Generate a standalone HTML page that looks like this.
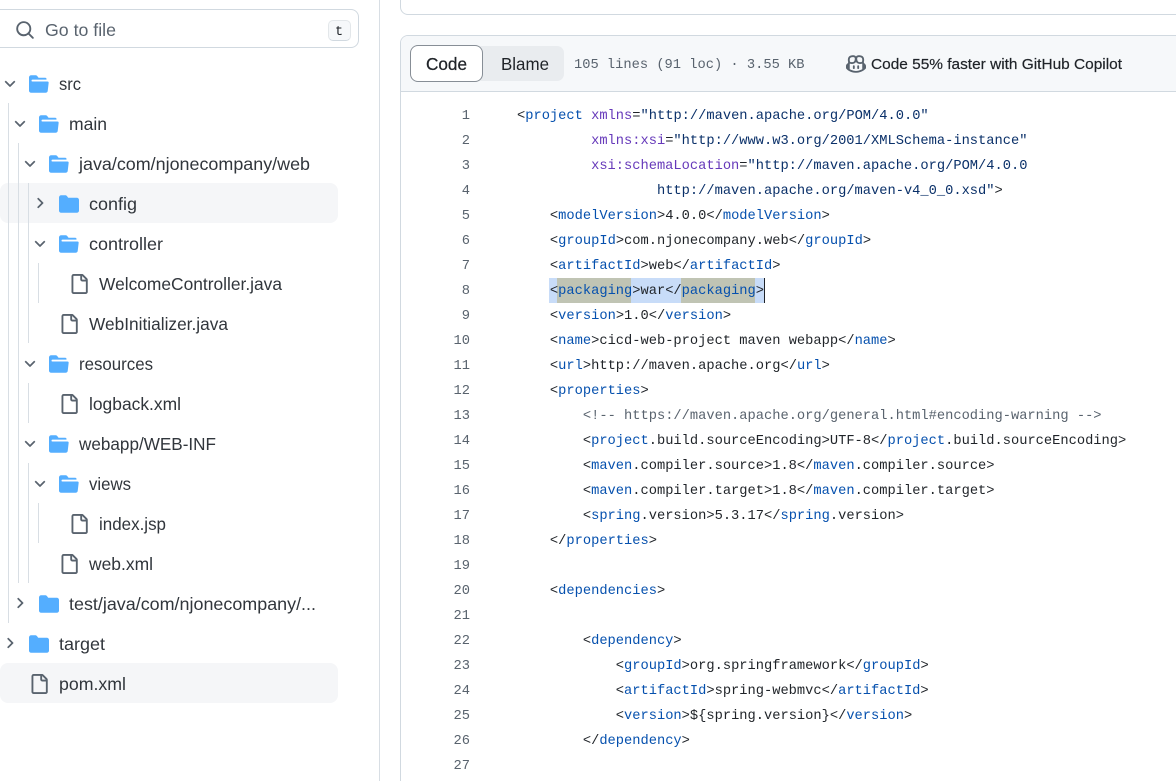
<!DOCTYPE html>
<html lang="en"><head><meta charset="utf-8"><title>pom.xml</title>
<style>
html,body{margin:0;padding:0;background:#fff;width:1176px;height:781px;overflow:hidden}
#w{position:relative;width:1176px;height:781px;overflow:hidden;font-family:"Liberation Sans",sans-serif;color:#1f2328}
.a{position:absolute;box-sizing:border-box}
svg{position:absolute;left:0;top:0}
svg text{font-family:"Liberation Sans",sans-serif}
.n{font-size:17.5px;fill:#31363c}
pre{margin:0;position:absolute;font:13.73px/25px "Liberation Mono",monospace;color:#1f2328}
.b{color:#0550ae}.p{color:#6639ba}.s{color:#0a3069}.c{color:#59636e}
</style></head><body><div id="w">
<div class="a" style="left:379px;top:0;width:1px;height:781px;background:#d8dee4"></div>
<div class="a" style="left:-10px;top:9px;width:369px;height:39px;border:1px solid #d1d9e0;border-radius:8px"></div>
<div class="a" style="left:328px;top:20px;width:23px;height:21px;background:#f6f8fa;border:1px solid #e3e7ea;border-bottom-color:#d1d9e0;border-radius:5px"></div>
<div class="a" style="left:0;top:183px;width:338px;height:40px;background:#f5f6f8;border-radius:8px"></div>
<div class="a" style="left:0;top:663px;width:338px;height:40px;background:#f5f6f8;border-radius:8px"></div>
<div class="a" style="left:8px;top:103px;width:1px;height:520px;background:#d8dee4"></div>
<div class="a" style="left:18px;top:143px;width:1px;height:440px;background:#d8dee4"></div>
<div class="a" style="left:28px;top:183px;width:1px;height:160px;background:#d8dee4"></div>
<div class="a" style="left:28px;top:383px;width:1px;height:40px;background:#d8dee4"></div>
<div class="a" style="left:28px;top:463px;width:1px;height:120px;background:#d8dee4"></div>
<div class="a" style="left:38px;top:263px;width:1px;height:40px;background:#d8dee4"></div>
<div class="a" style="left:38px;top:503px;width:1px;height:40px;background:#d8dee4"></div>

<div class="a" style="left:400px;top:-20px;width:800px;height:35px;border:1px solid #d1d9e0;border-radius:8px"></div>
<div class="a" style="left:400px;top:35px;width:800px;height:780px;border:1px solid #d1d9e0;border-radius:8px"></div>
<div class="a" style="left:401px;top:36px;width:790px;height:56px;background:#f6f8fa;border-bottom:1px solid #d1d9e0;border-radius:7px 0 0 0"></div>
<div class="a" style="left:411px;top:46px;width:153px;height:35px;background:#e9ecef;border-radius:7px"></div>
<div class="a" style="left:410px;top:45px;width:73px;height:37px;background:#fff;border:1px solid #878e96;border-radius:8px"></div>

<div class="a" style="left:549px;top:278px;width:215px;height:25px;background:#c8dcf8"></div>
<div class="a" style="left:557px;top:278px;width:74px;height:25px;background:#c0c4b4"></div>
<div class="a" style="left:681px;top:278px;width:74px;height:25px;background:#c0c4b4"></div>
<div class="a" style="left:764px;top:278px;width:1px;height:25px;background:#1f2328"></div>

<svg width="1176" height="781" viewBox="0 0 1176 781">
<defs>
<path id="fo" fill="#54aeff" d="M.513 1.513A1.75 1.75 0 0 1 1.75 1h3.5c.55 0 1.07.26 1.4.7l.9 1.2a.25.25 0 0 0 .2.1H13a1 1 0 0 1 1 1v.5H2.75a.75.75 0 0 0 0 1.5h11.978a1 1 0 0 1 .994 1.117L15 13.25A1.75 1.75 0 0 1 13.25 15H1.75A1.75 1.75 0 0 1 0 13.25V2.75c0-.464.184-.91.513-1.237Z"/>
<path id="fc" fill="#54aeff" d="M1.75 1A1.75 1.75 0 0 0 0 2.75v10.5C0 14.216.784 15 1.75 15h12.5A1.75 1.75 0 0 0 16 13.25v-8.5A1.75 1.75 0 0 0 14.25 3H7.5a.25.25 0 0 1-.2-.1l-.9-1.2C6.07 1.26 5.55 1 5 1H1.75Z"/>
<path id="fi" fill="#59636e" d="M2 1.75C2 .784 2.784 0 3.75 0h6.586c.464 0 .909.184 1.237.513l2.914 2.914c.329.328.513.773.513 1.237v9.586A1.75 1.75 0 0 1 13.25 16h-9.5A1.75 1.75 0 0 1 2 14.25Zm1.75-.25a.25.25 0 0 0-.25.25v12.5c0 .138.112.25.25.25h9.5a.25.25 0 0 0 .25-.25V6h-2.75A1.75 1.75 0 0 1 9 4.25V1.5Zm6.75.062V4.25c0 .138.112.25.25.25h2.688l-.011-.013-2.914-2.914-.013-.011Z"/>
<path id="cd" fill="#59636e" stroke="#59636e" stroke-width=".4" d="M12.78 5.22a.749.749 0 0 1 0 1.06l-4.25 4.25a.749.749 0 0 1-1.06 0L3.22 6.28a.749.749 0 1 1 1.06-1.06L8 8.939l3.72-3.719a.749.749 0 0 1 1.06 0Z"/>
<path id="cr" fill="#59636e" stroke="#59636e" stroke-width=".4" d="M6.22 3.22a.75.75 0 0 1 1.06 0l4.25 4.25a.75.75 0 0 1 0 1.06l-4.25 4.25a.751.751 0 0 1-1.042-.018.751.751 0 0 1-.018-1.042L9.94 8 6.22 4.28a.75.75 0 0 1 0-1.06Z"/>
</defs>
<path transform="translate(15 20) scale(1.25)" fill="#59636e" d="M10.68 11.74a6 6 0 0 1-7.922-8.982 6 6 0 0 1 8.982 7.922l3.04 3.04a.749.749 0 0 1-.326 1.275.749.749 0 0 1-.734-.215ZM11.5 7a4.499 4.499 0 1 0-8.997 0A4.499 4.499 0 0 0 11.5 7Z"/>
<text x="45" y="36" font-size="17.5" fill="#59636e" textLength="71" lengthAdjust="spacingAndGlyphs">Go to file</text>
<text x="335" y="35" style="font-family:'Liberation Mono',monospace" font-size="13.5" fill="#1f2328">t</text>

<g transform="translate(2 76)"><use href="#cd"/></g><g transform="translate(29 74) scale(1.25)"><use href="#fo"/></g><text class="n" x="59" y="90" textLength="22" lengthAdjust="spacingAndGlyphs">src</text>
<g transform="translate(12 116)"><use href="#cd"/></g><g transform="translate(39 114) scale(1.25)"><use href="#fo"/></g><text class="n" x="69" y="130" textLength="38" lengthAdjust="spacingAndGlyphs">main</text>
<g transform="translate(22 156)"><use href="#cd"/></g><g transform="translate(49 154) scale(1.25)"><use href="#fo"/></g><text class="n" x="79" y="170" textLength="231" lengthAdjust="spacingAndGlyphs">java/com/njonecompany/web</text>
<g transform="translate(31.5 195)"><use href="#cr"/></g><g transform="translate(59 194) scale(1.25)"><use href="#fc"/></g><text class="n" x="89" y="210" textLength="48" lengthAdjust="spacingAndGlyphs">config</text>
<g transform="translate(32 236)"><use href="#cd"/></g><g transform="translate(59 234) scale(1.25)"><use href="#fo"/></g><text class="n" x="89" y="250" textLength="74" lengthAdjust="spacingAndGlyphs">controller</text>
<g transform="translate(69 274) scale(1.25)"><use href="#fi"/></g><text class="n" x="99" y="290" textLength="183" lengthAdjust="spacingAndGlyphs">WelcomeController.java</text>
<g transform="translate(59 314) scale(1.25)"><use href="#fi"/></g><text class="n" x="89" y="330" textLength="139" lengthAdjust="spacingAndGlyphs">WebInitializer.java</text>
<g transform="translate(22 356)"><use href="#cd"/></g><g transform="translate(49 354) scale(1.25)"><use href="#fo"/></g><text class="n" x="79" y="370" textLength="74" lengthAdjust="spacingAndGlyphs">resources</text>
<g transform="translate(59 394) scale(1.25)"><use href="#fi"/></g><text class="n" x="89" y="410" textLength="92" lengthAdjust="spacingAndGlyphs">logback.xml</text>
<g transform="translate(22 436)"><use href="#cd"/></g><g transform="translate(49 434) scale(1.25)"><use href="#fo"/></g><text class="n" x="79" y="450" textLength="137" lengthAdjust="spacingAndGlyphs">webapp/WEB-INF</text>
<g transform="translate(32 476)"><use href="#cd"/></g><g transform="translate(59 474) scale(1.25)"><use href="#fo"/></g><text class="n" x="89" y="490" textLength="42" lengthAdjust="spacingAndGlyphs">views</text>
<g transform="translate(69 514) scale(1.25)"><use href="#fi"/></g><text class="n" x="99" y="530" textLength="67" lengthAdjust="spacingAndGlyphs">index.jsp</text>
<g transform="translate(59 554) scale(1.25)"><use href="#fi"/></g><text class="n" x="89" y="570" textLength="64" lengthAdjust="spacingAndGlyphs">web.xml</text>
<g transform="translate(11.5 595)"><use href="#cr"/></g><g transform="translate(39 594) scale(1.25)"><use href="#fc"/></g><text class="n" x="69" y="610" textLength="247" lengthAdjust="spacingAndGlyphs">test/java/com/njonecompany/...</text>
<g transform="translate(1.5 635)"><use href="#cr"/></g><g transform="translate(29 634) scale(1.25)"><use href="#fc"/></g><text class="n" x="59" y="650" textLength="46" lengthAdjust="spacingAndGlyphs">target</text>
<g transform="translate(29 674) scale(1.25)"><use href="#fi"/></g><text class="n" x="59" y="690" textLength="67" lengthAdjust="spacingAndGlyphs">pom.xml</text>

<text x="426" y="70" font-size="17.5" fill="#1f2328" stroke="#1f2328" stroke-width=".25" textLength="41" lengthAdjust="spacingAndGlyphs">Code</text>
<text x="501" y="70" font-size="17.5" fill="#1f2328" textLength="48" lengthAdjust="spacingAndGlyphs">Blame</text>
<text x="574" y="68" style="font-family:'Liberation Mono',monospace" font-size="13.73" fill="#59636e">105 lines (91 loc) · 3.55 KB</text>
<g transform="translate(846 54) scale(1.25)" fill="#59636e"><path d="M7.998 15.035c-4.562 0-7.873-2.914-7.998-3.749V9.338c.085-.628.677-1.686 1.588-2.065.013-.07.024-.143.036-.218.029-.183.06-.384.126-.612-.201-.508-.254-1.084-.254-1.656 0-.87.128-1.769.693-2.484.579-.733 1.494-1.124 2.724-1.261 1.206-.134 2.262.034 2.944.765.05.053.096.108.139.165.044-.057.094-.112.143-.165.682-.731 1.738-.899 2.944-.765 1.23.137 2.145.528 2.724 1.261.566.715.693 1.614.693 2.484 0 .572-.053 1.148-.254 1.656.066.228.098.429.126.612.012.076.024.148.037.218.924.385 1.522 1.471 1.591 2.095v1.872c0 .766-3.351 3.795-8.002 3.795Zm0-1.485c2.28 0 4.584-1.11 5.002-1.433V7.862l-.023-.116c-.49.21-1.075.291-1.727.291-1.146 0-2.059-.327-2.71-.991A3.222 3.222 0 0 1 8 6.303a3.24 3.24 0 0 1-.544.743c-.65.664-1.563.991-2.71.991-.652 0-1.236-.081-1.727-.291l-.023.116v4.255c.419.323 2.722 1.433 5.002 1.433ZM6.762 2.83c-.193-.206-.637-.413-1.682-.297-1.019.113-1.479.404-1.713.7-.247.312-.369.789-.369 1.554 0 .793.129 1.171.308 1.371.162.181.519.379 1.442.379.853 0 1.339-.235 1.638-.54.315-.322.527-.827.617-1.553.117-.935-.037-1.395-.241-1.614Zm4.155-.297c-1.044-.116-1.488.091-1.681.297-.204.219-.359.679-.242 1.614.091.726.303 1.231.618 1.553.299.305.784.54 1.638.54.922 0 1.28-.198 1.442-.379.179-.2.308-.578.308-1.371 0-.765-.123-1.242-.37-1.554-.233-.296-.693-.587-1.713-.7Z"/><path d="M6.25 9.037a.75.75 0 0 1 .75.75v1.501a.75.75 0 0 1-1.5 0V9.787a.75.75 0 0 1 .75-.75Zm4.25.75v1.501a.75.75 0 0 1-1.5 0V9.787a.75.75 0 0 1 1.5 0Z"/></g>
<text x="871" y="69" font-size="15" fill="#1f2328" stroke="#1f2328" stroke-width=".2" textLength="251" lengthAdjust="spacingAndGlyphs">Code 55% faster with GitHub Copilot</text>
</svg>

<pre class="c" style="left:430px;top:104px;width:40px;text-align:right">1
2
3
4
5
6
7
8
9
10
11
12
13
14
15
16
17
18
19
20
21
22
23
24
25
26
27</pre>
<pre style="left:517px;top:104px">&lt;<span class="b">project</span> <span class="p">xmlns</span>=<span class="s">"http://maven.apache.org/POM/4.0.0"</span>
         <span class="p">xmlns:xsi</span>=<span class="s">"http://www.w3.org/2001/XMLSchema-instance"</span>
         <span class="p">xsi:schemaLocation</span>=<span class="s">"http://maven.apache.org/POM/4.0.0</span>
                 <span class="s">http://maven.apache.org/maven-v4_0_0.xsd"</span>&gt;
    &lt;<span class="b">modelVersion</span>&gt;4.0.0&lt;/<span class="b">modelVersion</span>&gt;
    &lt;<span class="b">groupId</span>&gt;com.njonecompany.web&lt;/<span class="b">groupId</span>&gt;
    &lt;<span class="b">artifactId</span>&gt;web&lt;/<span class="b">artifactId</span>&gt;
    &lt;<span class="b">packaging</span>&gt;war&lt;/<span class="b">packaging</span>&gt;
    &lt;<span class="b">version</span>&gt;1.0&lt;/<span class="b">version</span>&gt;
    &lt;<span class="b">name</span>&gt;cicd-web-project maven webapp&lt;/<span class="b">name</span>&gt;
    &lt;<span class="b">url</span>&gt;http://maven.apache.org&lt;/<span class="b">url</span>&gt;
    &lt;<span class="b">properties</span>&gt;
        <span class="c">&lt;!-- https://maven.apache.org/general.html#encoding-warning --&gt;</span>
        &lt;<span class="b">project</span>.build.sourceEncoding&gt;UTF-8&lt;/<span class="b">project</span>.build.sourceEncoding&gt;
        &lt;<span class="b">maven</span>.compiler.source&gt;1.8&lt;/<span class="b">maven</span>.compiler.source&gt;
        &lt;<span class="b">maven</span>.compiler.target&gt;1.8&lt;/<span class="b">maven</span>.compiler.target&gt;
        &lt;<span class="b">spring</span>.version&gt;5.3.17&lt;/<span class="b">spring</span>.version&gt;
    &lt;/<span class="b">properties</span>&gt;

    &lt;<span class="b">dependencies</span>&gt;

        &lt;<span class="b">dependency</span>&gt;
            &lt;<span class="b">groupId</span>&gt;org.springframework&lt;/<span class="b">groupId</span>&gt;
            &lt;<span class="b">artifactId</span>&gt;spring-webmvc&lt;/<span class="b">artifactId</span>&gt;
            &lt;<span class="b">version</span>&gt;${spring.version}&lt;/<span class="b">version</span>&gt;
        &lt;/<span class="b">dependency</span>&gt;
</pre>
</div></body></html>
